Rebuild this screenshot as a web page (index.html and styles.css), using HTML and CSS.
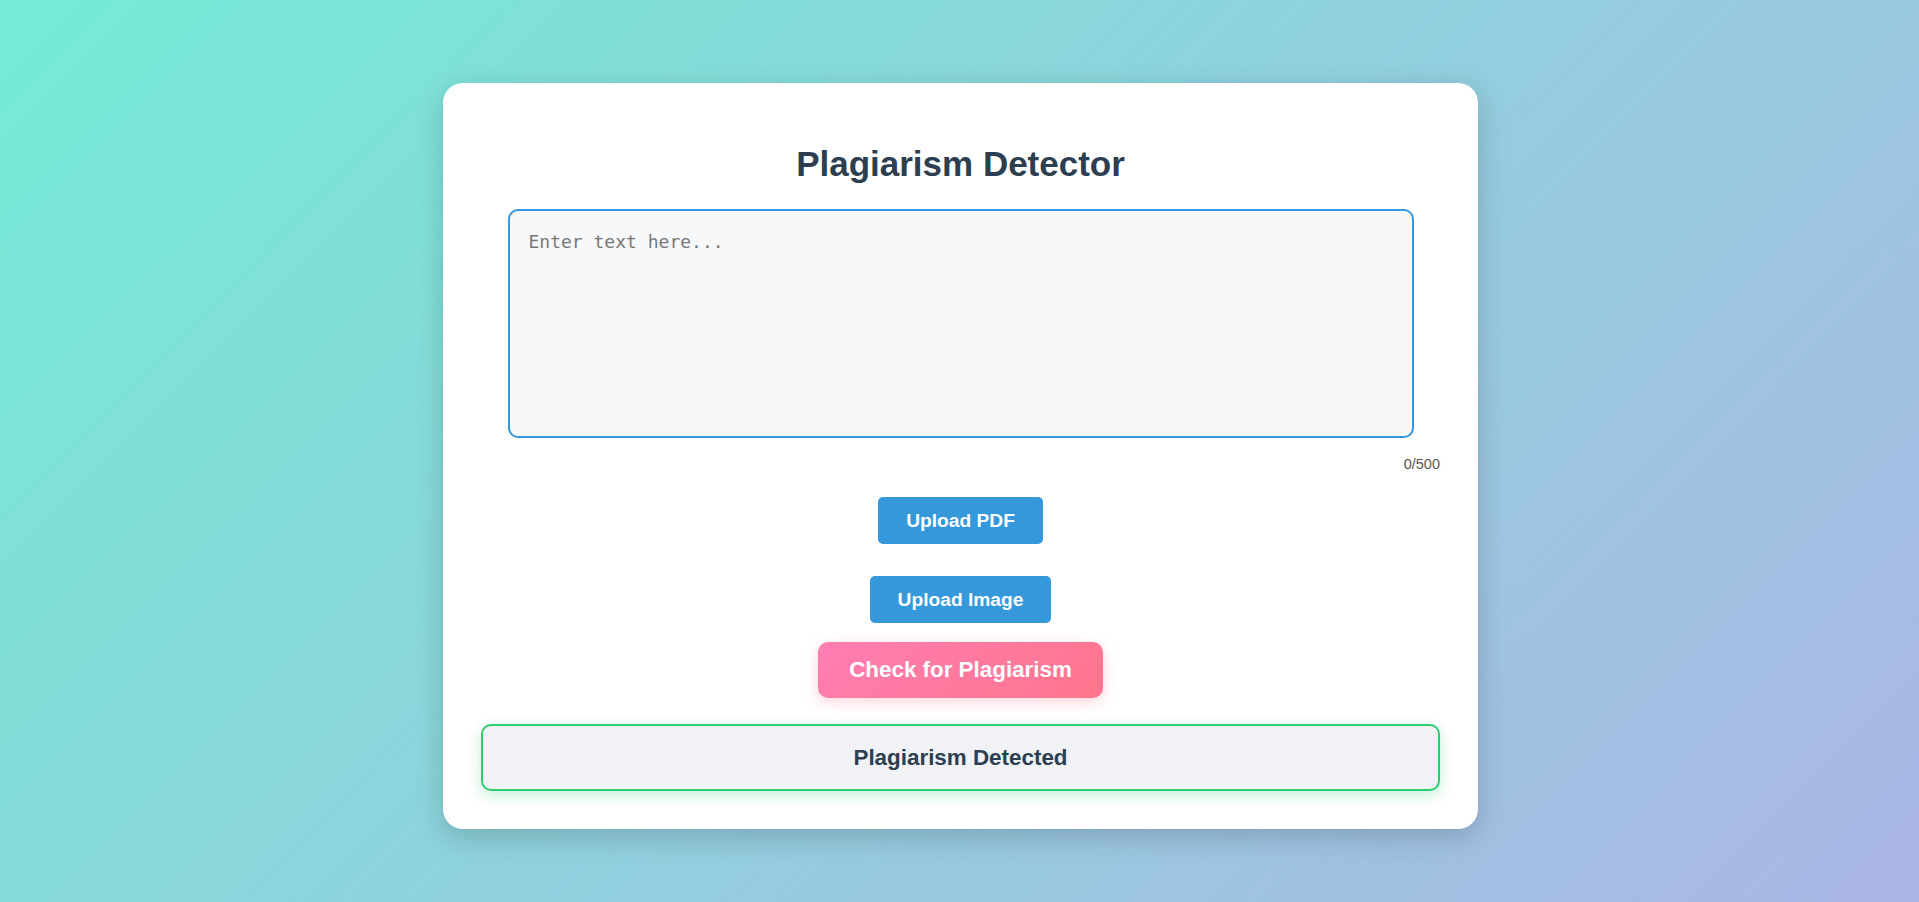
FILE: index.html
```html
<!DOCTYPE html>
<html lang="en">
<head>
<meta charset="utf-8">
<title>Plagiarism Detector</title>
<link rel="stylesheet" href="styles.css">
</head>
<body>
  <main class="card">
    <h1 class="title">Plagiarism Detector</h1>
    <textarea class="input" placeholder="Enter text here..."></textarea>
    <div class="counter">0/500</div>
    <div class="actions">
      <button class="btn btn-pdf" type="button">Upload PDF</button>
      <button class="btn btn-image" type="button">Upload Image</button>
      <button class="btn-check" type="button">Check for Plagiarism</button>
    </div>
    <div class="result">Plagiarism Detected</div>
  </main>
</body>
</html>
```

FILE: styles.css
```css
html, body {
  margin: 0;
  padding: 0;
}

body {
  min-height: 902px;
  box-sizing: border-box;
  background: linear-gradient(135deg, #74ebd5 0%, #acb6e5 100%);
  font-family: "Liberation Sans", Arial, sans-serif;
  display: flex;
  justify-content: center;
  align-items: flex-start;
  padding-top: 83px;
  padding-left: 2px;
}

.card {
  width: 1035px;
  box-sizing: border-box;
  background: #ffffff;
  border-radius: 20px;
  padding: 38px 38px 38px 38px;
  box-shadow: 0 8px 28px rgba(0, 0, 0, 0.18);
  display: flex;
  flex-direction: column;
}

.title {
  margin: 23px 0 0;
  font-size: 35px;
  line-height: 40px;
  font-weight: bold;
  color: #2c3e50;
  text-align: center;
}

.input {
  display: block;
  width: 906px;
  height: 229px;
  box-sizing: border-box;
  margin: 25px auto 0;
  padding: 20px 19px 18px;
  border: 2px solid #3498db;
  border-radius: 10px;
  background: #f7f8fa;
  font-family: "DejaVu Sans Mono", monospace;
  font-size: 18px;
  color: #333;
  resize: none;
  outline: none;
}

.input::placeholder {
  color: #777777;
}

.counter {
  margin-top: 18px;
  text-align: right;
  font-size: 14.5px;
  line-height: 17px;
  color: #555;
}

.actions {
  display: flex;
  flex-direction: column;
  align-items: center;
}

.btn {
  border: none;
  border-radius: 5px;
  background: #3498db;
  color: #ffffff;
  font-family: "Liberation Sans", Arial, sans-serif;
  font-size: 19.2px;
  font-weight: bold;
  line-height: 22px;
  padding: 12.5px 28px;
  cursor: pointer;
}

.btn-pdf {
  margin-top: 24px;
}

.btn-image {
  margin-top: 32px;
}

.btn-check {
  margin-top: 19px;
  border: none;
  border-radius: 10px;
  background: linear-gradient(135deg, #ff7eb3 0%, #ff758c 100%);
  color: #ffffff;
  font-family: "Liberation Sans", Arial, sans-serif;
  font-size: 22.4px;
  font-weight: bold;
  line-height: 26px;
  padding: 15px 31.5px;
  box-shadow: 0 4px 14px rgba(255, 117, 140, 0.3);
  cursor: pointer;
}

.result {
  margin-top: 26px;
  border: 2px solid #2ecc71;
  border-radius: 10px;
  background: #f0f2f5;
  padding: 19px;
  text-align: center;
  font-size: 22.4px;
  font-weight: bold;
  line-height: 25px;
  color: #2c3e50;
  box-shadow: 0 4px 14px rgba(46, 204, 113, 0.3);
}
```
